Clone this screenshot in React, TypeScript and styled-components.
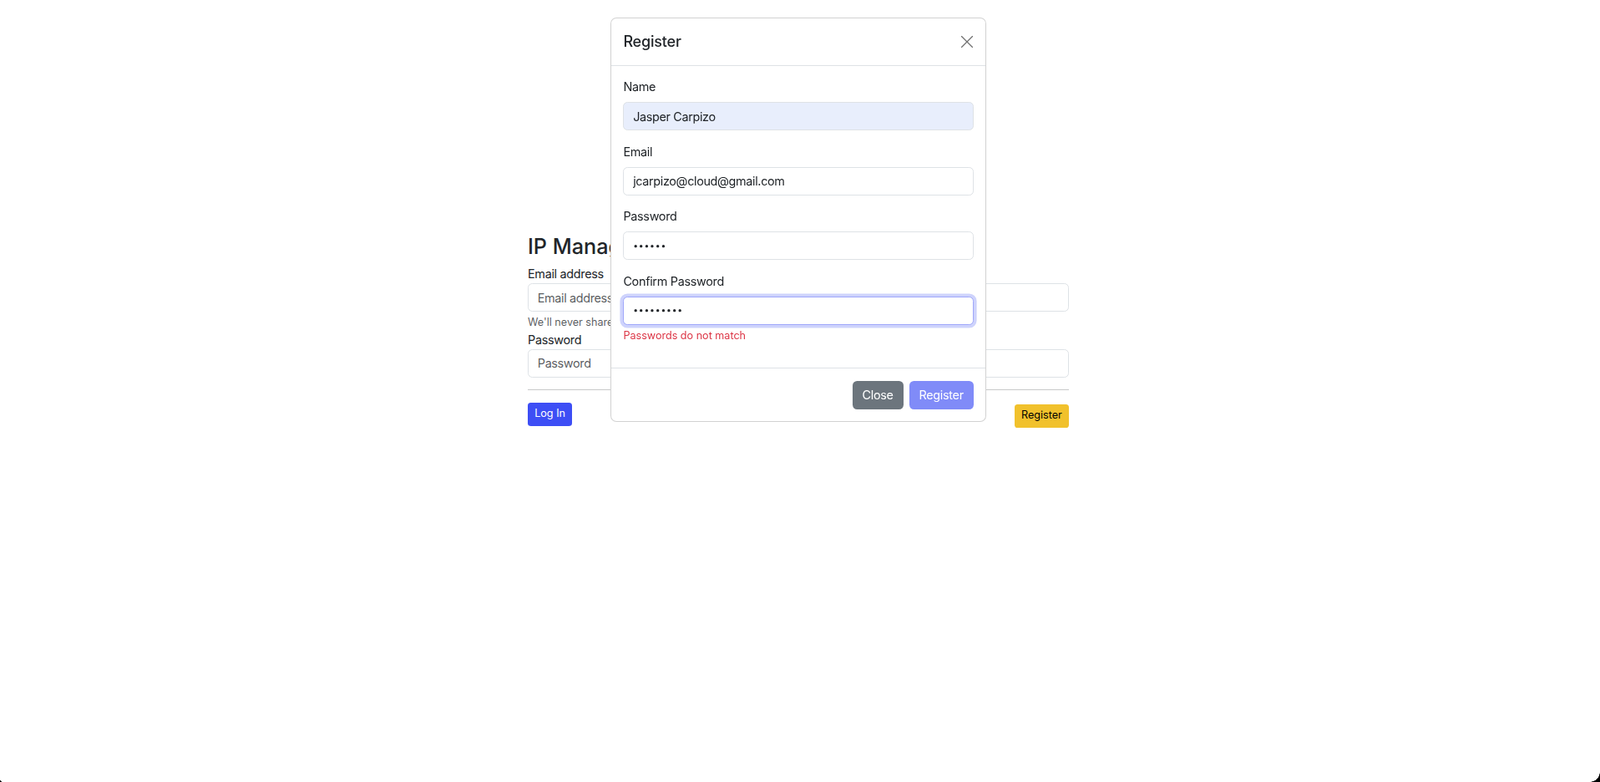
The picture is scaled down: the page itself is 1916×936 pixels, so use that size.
import React from "react";
import styled, { createGlobalStyle, css } from "styled-components";

const PRIMARY = "#3d4ef5";

const GlobalStyle = createGlobalStyle`
  *, *::before, *::after { box-sizing: border-box; }
  html, body { margin: 0; padding: 0; background: #fff; }
  body {
    font-family: Inter, "Noto Sans", "Liberation Sans", sans-serif;
    color: #212529;
    font-size: 14.4px;
    line-height: 1.5;
  }
`;

const Page = styled.div`
  min-height: 936px;
  padding: 280px 4px 0 0;
  display: flex;
  justify-content: center;
`;

const Container = styled.main`
  width: 648px;
  display: flex;
  flex-direction: column;
`;

const Title = styled.h3`
  margin: 0 0 7.2px;
  font-size: 25.2px;
  font-weight: 500;
  line-height: 1.2;
`;

const PlainLabel = styled.label`
  display: block;
  font-size: 14.4px;
  line-height: 21.6px;
  letter-spacing: -0.3px;
`;

const Input = styled.input<{ $autofill?: boolean; $focused?: boolean; $secret?: boolean }>`
  display: block;
  width: 100%;
  height: 34.4px;
  padding: 5.4px 10.8px;
  font-family: inherit;
  font-size: 14.4px;
  line-height: 1.5;
  letter-spacing: -0.35px;
  color: #212529;
  background: ${(p) => (p.$autofill ? "#e8eefc" : "#fff")};
  border: 1px solid #dee2e6;
  border-radius: 5.4px;
  outline: none;
  ${(p) =>
    p.$secret &&
    css`
      font-size: 10.4px;
      letter-spacing: 0.8px;
    `}
  &::placeholder { color: rgba(33, 37, 41, 0.75); }
  ${(p) =>
    p.$focused &&
    css`
      border-color: #9fa7fa;
      box-shadow: 0 0 0 3.6px rgba(61, 78, 245, 0.25);
    `}
`;

const HelpText = styled.div`
  margin-top: 3.6px;
  font-size: 12.6px;
  line-height: 18.9px;
  color: rgba(33, 37, 41, 0.75);
`;

const Divider = styled.hr`
  margin: 14.4px 0;
  border: 0;
  border-top: 1px solid #c8c9ca;
`;

const ActionRow = styled.div`
  display: flex;
  justify-content: space-between;
  align-items: flex-start;
`;

const SmallButton = styled.button<{ $variant: "primary" | "warning"; $offset?: number }>`
  font-family: inherit;
  font-size: 12.6px;
  line-height: 18.9px;
  padding: 3.6px 7.2px;
  border-radius: 3.6px;
  border: 1px solid transparent;
  margin-top: ${(p) => p.$offset ?? 0}px;
  cursor: pointer;
  ${(p) =>
    p.$variant === "primary"
      ? css`background: ${PRIMARY}; color: #fff;`
      : css`background: #f1c12c; color: #000;`}
`;

/* ---------- Modal ---------- */

const Overlay = styled.div`
  position: fixed;
  inset: 0;
  display: flex;
  justify-content: center;
  align-items: flex-start;
  padding: 21px 4px 0 0;
`;

const Dialog = styled.div`
  width: 450px;
  background: #fff;
  border: 1px solid rgba(0, 0, 0, 0.175);
  border-radius: 7.2px;
  display: flex;
  flex-direction: column;
`;

const ModalHeader = styled.div`
  display: flex;
  align-items: center;
  justify-content: space-between;
  padding: 14.4px;
  border-bottom: 1px solid #dee2e6;
`;

const ModalTitle = styled.h5`
  margin: 0;
  font-size: 18px;
  font-weight: 500;
  line-height: 27px;
  letter-spacing: -0.2px;
`;

const CloseX = styled.button`
  width: 15px;
  height: 15px;
  padding: 0;
  border: 0;
  background: transparent;
  display: flex;
  align-items: center;
  justify-content: center;
  cursor: pointer;
  margin-right: 0.5px;
`;

const ModalBody = styled.div`
  padding: 14.4px;
`;

const Field = styled.div`
  margin-bottom: 14.4px;
`;

const FormLabel = styled.label`
  display: block;
  margin-bottom: 7.2px;
  font-size: 14.4px;
  line-height: 21.6px;
  letter-spacing: -0.3px;
`;

const Feedback = styled.div`
  margin-top: 3.6px;
  font-size: 12.6px;
  line-height: 18.9px;
  color: #dc3545;
`;

const ModalFooter = styled.div`
  display: flex;
  justify-content: flex-end;
  align-items: center;
  gap: 7.2px;
  padding: 14.4px;
  border-top: 1px solid #dee2e6;
`;

const Button = styled.button<{ $variant: "secondary" | "primary" }>`
  font-family: inherit;
  font-size: 14.4px;
  line-height: 21.6px;
  letter-spacing: -0.3px;
  padding: 5.4px 10.8px;
  border-radius: 5.4px;
  border: 1px solid transparent;
  color: #fff;
  cursor: pointer;
  ${(p) =>
    p.$variant === "secondary"
      ? css`background: #6c757d;`
      : css`
          background: ${PRIMARY};
          &:disabled { opacity: 0.65; cursor: default; }
        `}
`;

const Corner = styled.div<{ $side: "left" | "right"; $r: number }>`
  position: fixed;
  bottom: 0;
  ${(p) => p.$side}: 0;
  width: ${(p) => p.$r}px;
  height: ${(p) => p.$r}px;
  background: radial-gradient(
    circle at ${(p) => (p.$side === "right" ? "0 0" : "100% 0")},
    transparent ${(p) => p.$r - 0.5}px,
    #000 ${(p) => p.$r}px
  );
  pointer-events: none;
`;

const noop = () => {};

export default function App() {
  return (
    <>
      <GlobalStyle />
      <Page>
        <Container>
          <Title>IP Management System</Title>
          <PlainLabel htmlFor="login-email">Email address</PlainLabel>
          <Input id="login-email" type="email" placeholder="Email address" />
          <HelpText>We'll never share your email with anyone else.</HelpText>
          <PlainLabel htmlFor="login-password">Password</PlainLabel>
          <Input id="login-password" type="password" placeholder="Password" />
          <Divider />
          <ActionRow>
            <SmallButton $variant="primary">Log In</SmallButton>
            <SmallButton $variant="warning" $offset={2}>
              Register
            </SmallButton>
          </ActionRow>
        </Container>
      </Page>

      <Overlay>
        <Dialog role="dialog" aria-modal="true">
          <ModalHeader>
            <ModalTitle>Register</ModalTitle>
            <CloseX aria-label="Close">
              <svg width="14" height="14" viewBox="0 0 14 14">
                <path d="M0.5 0.5 L13.5 13.5 M13.5 0.5 L0.5 13.5" stroke="#6f6f6f" strokeWidth="1.3" strokeLinecap="round" />
              </svg>
            </CloseX>
          </ModalHeader>
          <ModalBody>
            <Field>
              <FormLabel htmlFor="reg-name">Name</FormLabel>
              <Input id="reg-name" $autofill value="Jasper Carpizo" onChange={noop} />
            </Field>
            <Field>
              <FormLabel htmlFor="reg-email">Email</FormLabel>
              <Input id="reg-email" value="jcarpizo@cloud@gmail.com" onChange={noop} />
            </Field>
            <Field>
              <FormLabel htmlFor="reg-pass">Password</FormLabel>
              <Input id="reg-pass" type="password" $secret value="123456" onChange={noop} />
            </Field>
            <Field>
              <FormLabel htmlFor="reg-confirm">Confirm Password</FormLabel>
              <Input id="reg-confirm" type="password" $secret $focused value="123456789" onChange={noop} />
              <Feedback>Passwords do not match</Feedback>
            </Field>
          </ModalBody>
          <ModalFooter>
            <Button $variant="secondary">Close</Button>
            <Button $variant="primary" disabled>
              Register
            </Button>
          </ModalFooter>
        </Dialog>
      </Overlay>

      <Corner $side="right" $r={12} />
      <Corner $side="left" $r={3} />
    </>
  );
}
